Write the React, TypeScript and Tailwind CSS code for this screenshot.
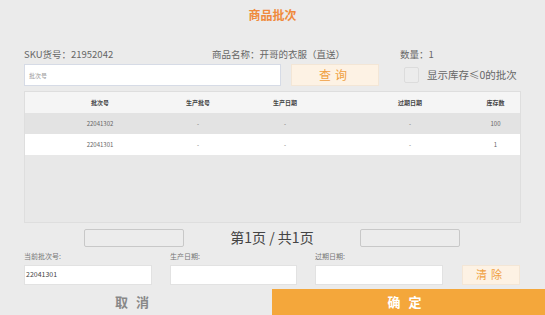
import React from "react";

const cols = "grid grid-cols-[150px_46px_128px_122px_1fr]";

const rows = [
  { batch: "22041302", lot: "-", mfg: "-", exp: "-", qty: "100", bg: "bg-[#e3e3e3]" },
  { batch: "22041301", lot: "-", mfg: "-", exp: "-", qty: "1", bg: "bg-white" },
];

export default function App() {
  return (
    <div
      className="flex h-[315px] w-[545px] flex-col overflow-hidden bg-[#ebebeb] text-[#555]"
      style={{ fontFamily: '"Noto Sans CJK SC", "Noto Sans", sans-serif' }}
    >
      <div className="flex h-[29px] items-center justify-center text-[12px] font-bold text-[#f08a3c]">
        商品批次
      </div>

      <div className="mt-[16px] flex h-[18px] items-center whitespace-nowrap px-[24px] text-[9.5px] text-[#666]">
        <span className="w-[188px]">SKU货号：21952042</span>
        <span className="w-[188px]">商品名称：开哥的衣服（直送）</span>
        <span>数量：1</span>
      </div>

      <div className="mt-[1px] flex h-[22px] items-stretch px-[24px]">
        <div className="flex w-[257px] items-center border border-[#d6dbe6] bg-white pl-[4px] text-[6px] text-[#999]">
          批次号
        </div>
        <button className="ml-[10px] w-[88px] border border-[#f3e6d6] bg-[#fdf2e4] text-[12px] tracking-[4px] text-[#f0a040]">
          查询
        </button>
        <div className="ml-[25px] flex items-center whitespace-nowrap">
          <span className="h-[16px] w-[15px] rounded-[2px] border border-[#dcdcdc] bg-[#ececec]" />
          <span className="ml-[8px] text-[10.5px] text-[#666]">显示库存≤0的批次</span>
        </div>
      </div>

      <div className="mx-[24px] mt-[5px] flex h-[132px] flex-col border border-[#dedede] bg-[#e8e8e8]">
        <div className={`${cols} h-[21px] items-center bg-[#f5f5f5] text-center text-[6px] font-bold text-[#444]`}>
          <span>批次号</span>
          <span>生产批号</span>
          <span>生产日期</span>
          <span>过期日期</span>
          <span>库存数</span>
        </div>
        {rows.map((r) => (
          <div key={r.batch} className={`${cols} h-[21px] items-center text-center text-[6px] text-[#666] ${r.bg}`}>
            <span>{r.batch}</span>
            <span>{r.lot}</span>
            <span>{r.mfg}</span>
            <span>{r.exp}</span>
            <span>{r.qty}</span>
          </div>
        ))}
      </div>

      <div className="mt-[5px] flex h-[19px] items-center">
        <button className="ml-[84px] h-[18px] w-[100px] rounded-[2px] border border-[#c8c8c8] bg-[#ececec]" />
        <span className="w-[176px] text-center text-[14px] text-[#444]">第1页 / 共1页</span>
        <button className="h-[18px] w-[100px] rounded-[2px] border border-[#c8c8c8] bg-[#ececec]" />
      </div>

      <div className="mt-[4px] flex px-[24px] text-[7px] text-[#777]">
        <span className="w-[146px]">当前批次号:</span>
        <span className="w-[145px]">生产日期:</span>
        <span>过期日期:</span>
      </div>

      <div className="mt-[3px] flex h-[20px] items-stretch px-[24px]">
        <div className="flex w-[128px] items-center border border-[#e2e2e2] bg-white pl-[1px] text-[7px] text-[#444]">
          22041301
        </div>
        <div className="ml-[18px] w-[127px] border border-[#e2e2e2] bg-white" />
        <div className="ml-[18px] w-[128px] border border-[#e2e2e2] bg-white" />
        <button className="ml-[19px] w-[58px] border border-[#f3e6d6] bg-[#fdf2e4] text-[11px] tracking-[4px] text-[#f0a040]">
          清除
        </button>
      </div>

      <div className="mt-[4px] flex flex-1">
        <div className="flex w-[272px] items-center justify-center text-[13px] font-bold tracking-[8px] text-[#888]">
          取消
        </div>
        <div className="flex flex-1 items-center justify-center bg-[#f4a73b] text-[13px] font-bold tracking-[8px] text-white">
          确定
        </div>
      </div>
    </div>
  );
}
